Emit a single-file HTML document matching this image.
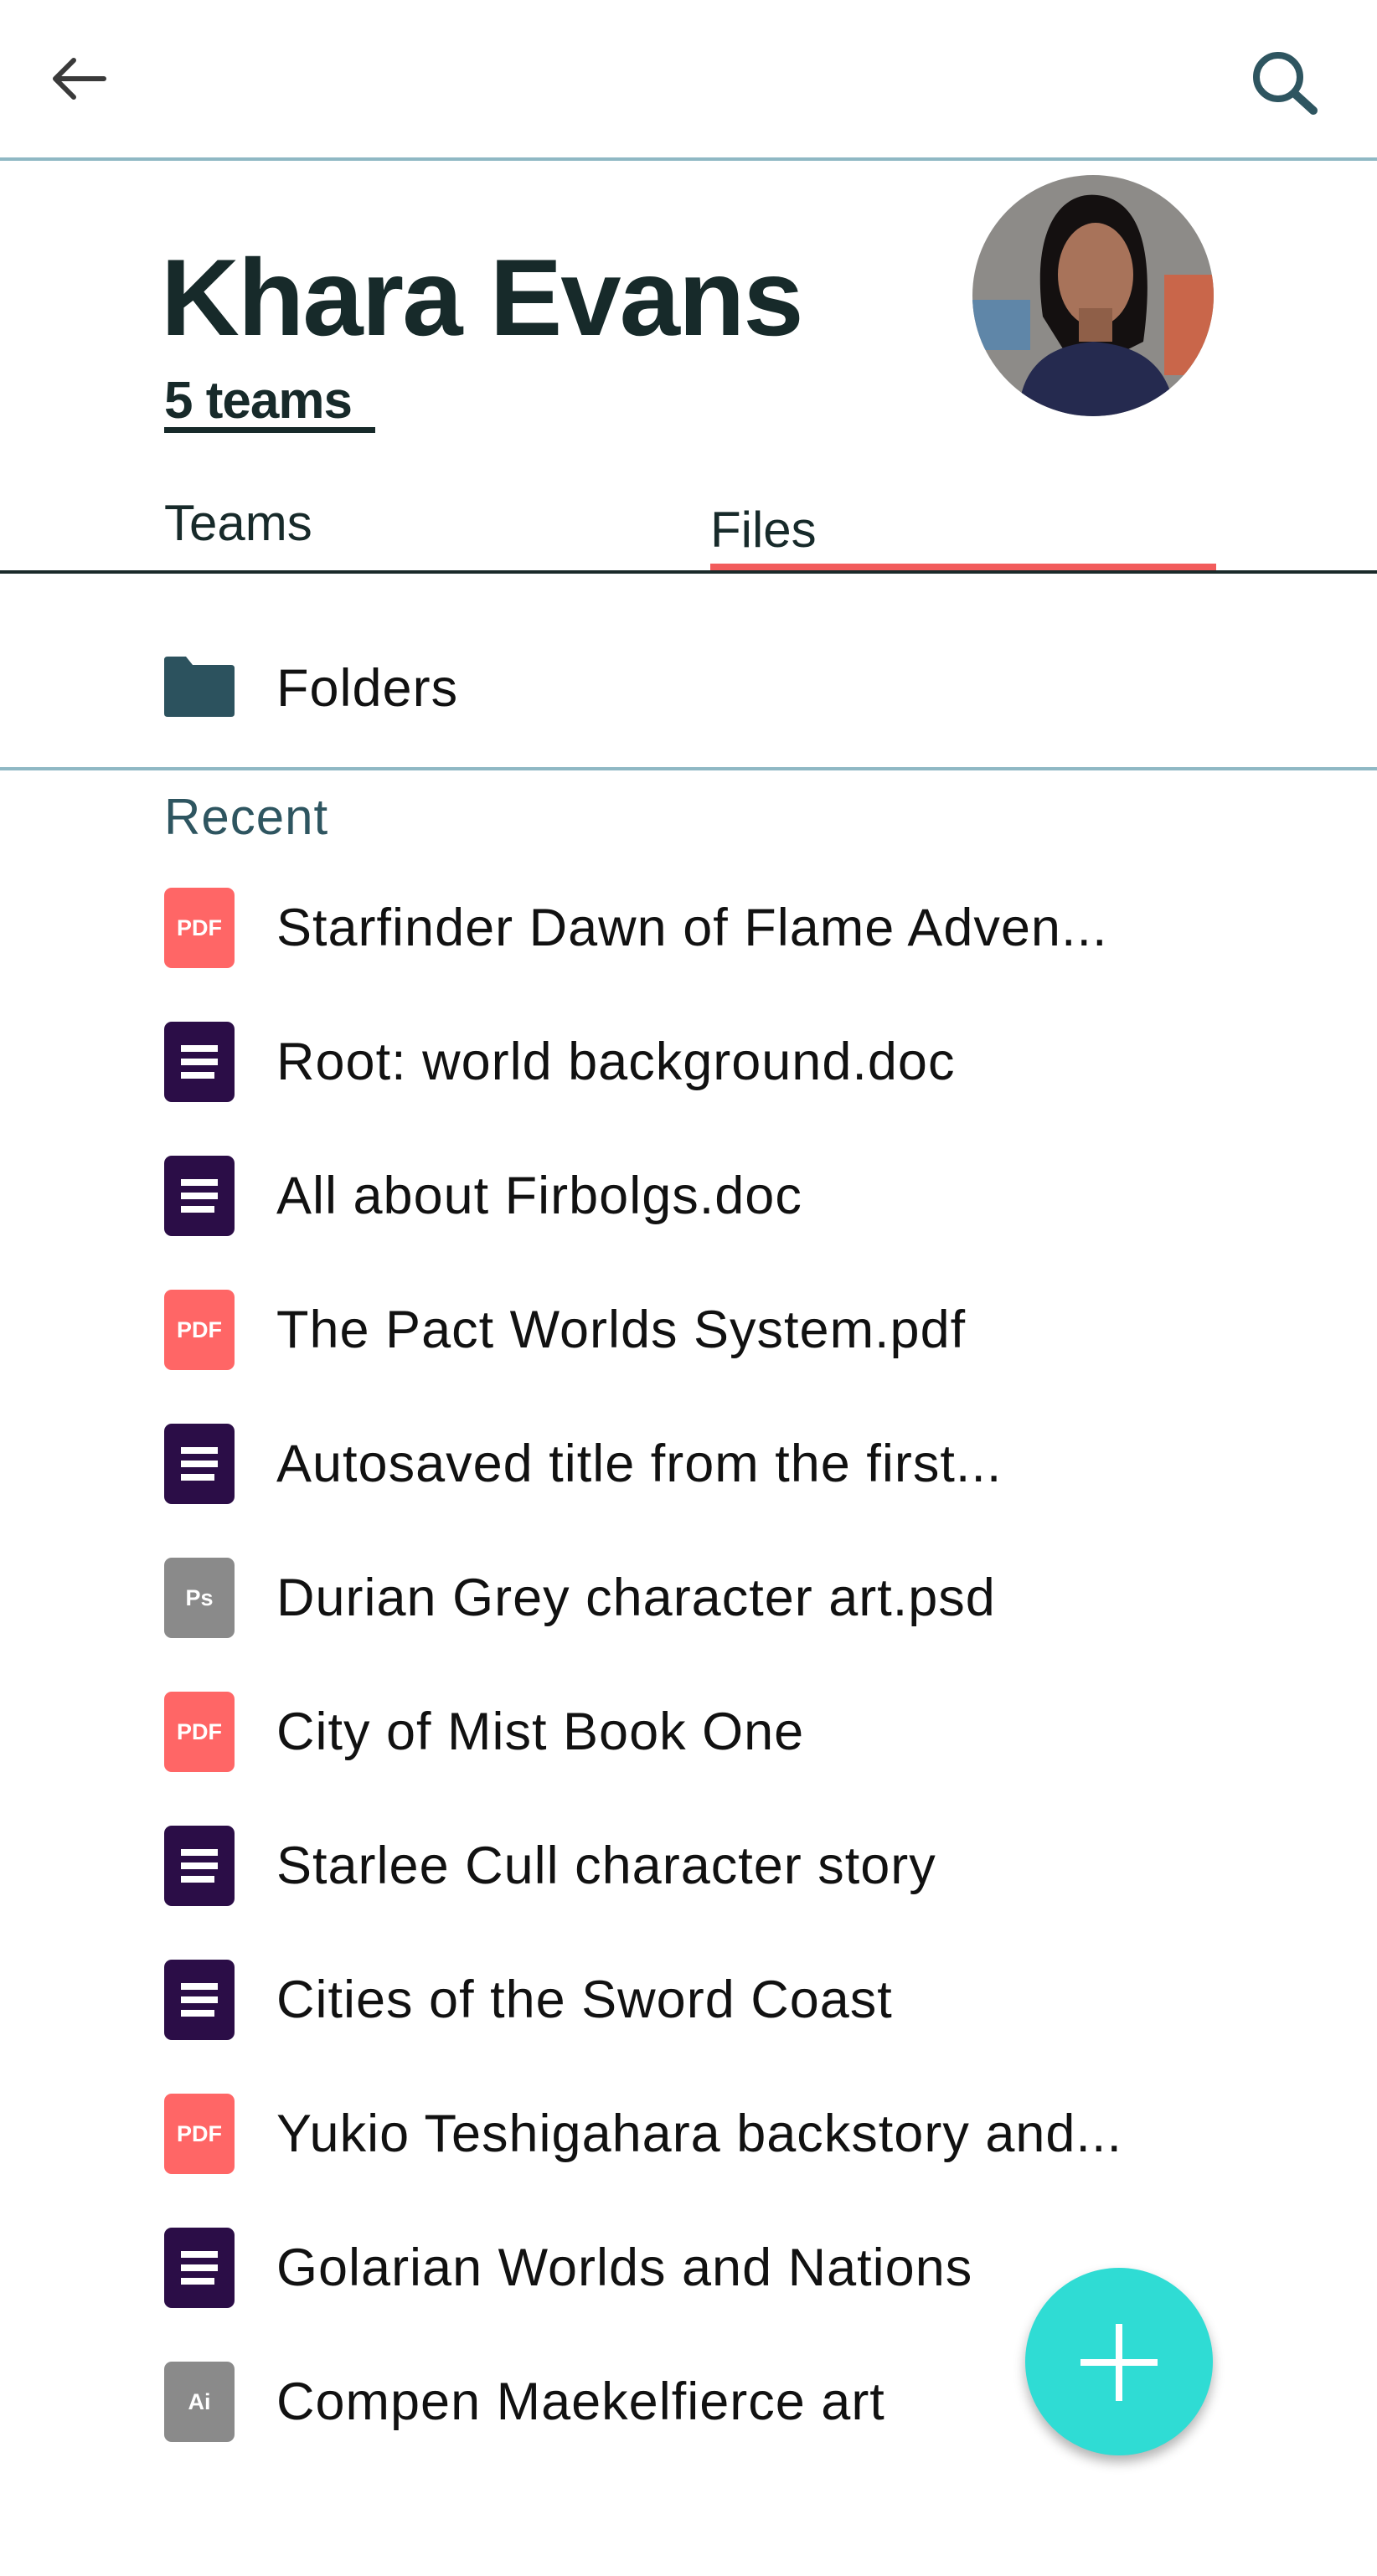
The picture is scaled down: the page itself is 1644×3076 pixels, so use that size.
<!DOCTYPE html>
<html><head><meta charset="utf-8"><style>
*{margin:0;padding:0;box-sizing:border-box}
html,body{width:1644px;height:3076px;background:#fff;overflow:hidden;font-family:"Liberation Sans",sans-serif;position:relative}
.a{position:absolute}
.row{position:absolute;left:0;width:1644px;height:96px}
.ic{position:absolute;left:196px;top:0;width:84px;height:96px;border-radius:9px;color:#fff;font-weight:bold;display:flex;align-items:center;justify-content:center}
.pdf{background:#ff6666;font-size:27px}
.doc{background:#2b0d47}
.gr{background:#8a8a8a;font-size:27px}
.doc i{position:absolute;left:20px;height:8px;background:#fff;width:44px}
.t{position:absolute;left:330px;top:0;line-height:96px;font-size:63px;color:#111;white-space:nowrap;letter-spacing:1px}
</style></head><body>
<svg class="a" style="left:56px;top:64px" width="76" height="60" viewBox="0 0 76 60"><path d="M68 30H10M32 8L10 30l22 22" fill="none" stroke="#3a3a3a" stroke-width="6" stroke-linecap="round" stroke-linejoin="round"/></svg>
<svg class="a" style="left:1492px;top:56px" width="96" height="86" viewBox="0 0 96 86"><circle cx="34" cy="36" r="26" fill="none" stroke="#2e5560" stroke-width="8"/><path d="M54 56l22 20" stroke="#2e5560" stroke-width="10" stroke-linecap="round"/></svg>
<div class="a" style="left:0;top:188px;width:1644px;height:4px;background:#8fb8c4"></div>

<div class="a" style="left:192px;top:280px;font-size:130px;font-weight:bold;color:#172a2a;letter-spacing:-2px;line-height:150px">Khara Evans</div>
<div class="a" style="left:196px;top:444px;font-size:62px;font-weight:bold;color:#172a2a;line-height:70px;letter-spacing:-1px">5 teams</div>
<div class="a" style="left:196px;top:510px;width:252px;height:7px;background:#172a2a"></div>

<svg class="a" style="left:1160px;top:208px" width="290" height="290" viewBox="0 0 290 290">
<defs><clipPath id="c"><circle cx="145" cy="145" r="144"/></clipPath></defs>
<g clip-path="url(#c)">
<rect width="290" height="290" fill="#8d8b88"/>
<rect x="0" y="150" width="70" height="60" fill="#5f86a8"/>
<rect x="230" y="120" width="60" height="120" fill="#c9664a"/>
<path d="M85 170C70 60 110 20 150 25C200 30 220 90 205 200L185 210L110 210Z" fill="#141010"/>
<ellipse cx="148" cy="120" rx="45" ry="62" fill="#a8735a"/>
<rect x="128" y="160" width="40" height="40" fill="#8f5f48"/>
<path d="M55 300C55 230 90 205 145 200C205 205 240 230 245 300Z" fill="#252a4f"/>
</g></svg>

<div class="a" style="left:196px;top:590px;font-size:60px;color:#172a2a;line-height:70px">Teams</div>
<div class="a" style="left:848px;top:598px;font-size:60px;color:#172a2a;line-height:70px">Files</div>
<div class="a" style="left:848px;top:673px;width:604px;height:8px;background:#f25c5c"></div>
<div class="a" style="left:0;top:681px;width:1644px;height:4px;background:#1a2a2a"></div>

<svg class="a" style="left:196px;top:784px" width="84" height="72" viewBox="0 0 84 72"><path d="M0 4Q0 0 4 0H26L34 10H80Q84 10 84 14V68Q84 72 80 72H4Q0 72 0 68Z" fill="#2c525e"/></svg>
<div class="a" style="left:330px;top:774px;font-size:63px;color:#111;line-height:96px;letter-spacing:1px">Folders</div>
<div class="a" style="left:0;top:916px;width:1644px;height:4px;background:#8fb8c4"></div>
<div class="a" style="left:196px;top:936px;font-size:60px;color:#2e5560;line-height:80px;letter-spacing:1px">Recent</div>

<div class="row" style="top:1060px"><div class="ic pdf">PDF</div><div class="t">Starfinder Dawn of Flame Adven...</div></div>
<div class="row" style="top:1220px"><div class="ic doc"><i style="top:28px"></i><i style="top:44px"></i><i style="top:60px;width:40px"></i></div><div class="t">Root: world background.doc</div></div>
<div class="row" style="top:1380px"><div class="ic doc"><i style="top:28px"></i><i style="top:44px"></i><i style="top:60px;width:40px"></i></div><div class="t">All about Firbolgs.doc</div></div>
<div class="row" style="top:1540px"><div class="ic pdf">PDF</div><div class="t">The Pact Worlds System.pdf</div></div>
<div class="row" style="top:1700px"><div class="ic doc"><i style="top:28px"></i><i style="top:44px"></i><i style="top:60px;width:40px"></i></div><div class="t">Autosaved title from the first...</div></div>
<div class="row" style="top:1860px"><div class="ic gr">Ps</div><div class="t">Durian Grey character art.psd</div></div>
<div class="row" style="top:2020px"><div class="ic pdf">PDF</div><div class="t">City of Mist Book One</div></div>
<div class="row" style="top:2180px"><div class="ic doc"><i style="top:28px"></i><i style="top:44px"></i><i style="top:60px;width:40px"></i></div><div class="t">Starlee Cull character story</div></div>
<div class="row" style="top:2340px"><div class="ic doc"><i style="top:28px"></i><i style="top:44px"></i><i style="top:60px;width:40px"></i></div><div class="t">Cities of the Sword Coast</div></div>
<div class="row" style="top:2500px"><div class="ic pdf">PDF</div><div class="t">Yukio Teshigahara backstory and...</div></div>
<div class="row" style="top:2660px"><div class="ic doc"><i style="top:28px"></i><i style="top:44px"></i><i style="top:60px;width:40px"></i></div><div class="t">Golarian Worlds and Nations</div></div>
<div class="row" style="top:2820px"><div class="ic gr">Ai</div><div class="t">Compen Maekelfierce art</div></div>

<div class="a" style="left:1224px;top:2708px;width:224px;height:224px;border-radius:50%;background:#2fdcd4;box-shadow:0 8px 14px rgba(0,0,0,.3)"></div>
<div class="a" style="left:1290px;top:2817px;width:92px;height:8px;background:#fff"></div>
<div class="a" style="left:1332px;top:2775px;width:8px;height:92px;background:#fff"></div>
</body></html>
